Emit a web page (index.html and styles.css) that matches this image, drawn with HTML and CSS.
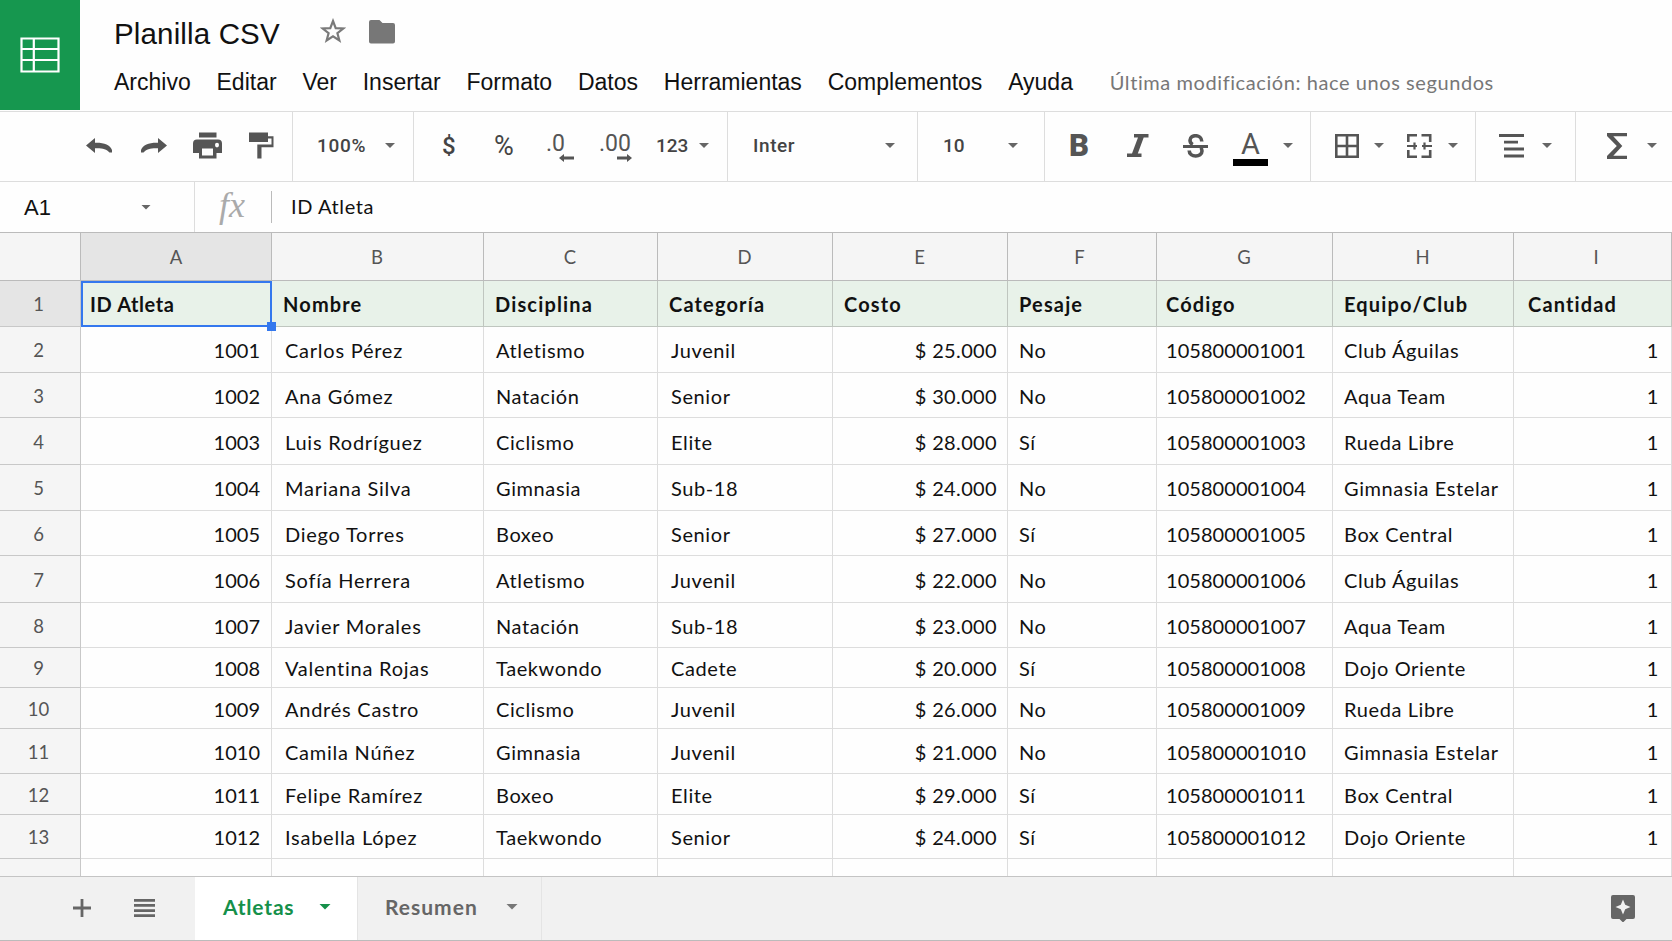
FILE: index.html
```html
<!DOCTYPE html>
<html lang="es">
<head>
    <meta charset="UTF-8">
    <meta name="viewport" content="width=device-width, initial-scale=1.0">
    <title>Planilla CSV</title>
    <link rel="stylesheet" href="styles.css">
</head>
<body>
    <header>
        <div class="logo">
            <svg width="40" height="36" viewBox="0 0 40 36" fill="none" stroke="#fff" stroke-width="2.2">
                <path d="M1.5 1.5h37v33h-37zM13.8 1.5v33M1.5 12h37M1.5 23h37"/>
            </svg>
        </div>
        <div class="heading">
            <div class="title-row">
                <h1>Planilla CSV</h1>
                <svg class="star" width="26" height="26" viewBox="0 0 26 26" fill="none" stroke="#7a7a7a" stroke-width="2.2">
                    <path d="M13 3l2.7 7.1 7.6.4-5.9 4.7 2 7.3-6.4-4.1-6.4 4.1 2-7.3-5.9-4.7 7.6-.4z"/>
                </svg>
                <svg class="folder" width="26" height="24" viewBox="0 0 26 24" fill="#777">
                    <path d="M2 0h8.500l3 3H24a2 2 0 0 1 2 2v16.500a2 2 0 0 1-2 2H2a2 2 0 0 1-2-2V2a2 2 0 0 1 2-2z"/>
                </svg>
            </div>
            <nav>
                <a>Archivo</a>
                <a>Editar</a>
                <a>Ver</a>
                <a>Insertar</a>
                <a>Formato</a>
                <a>Datos</a>
                <a>Herramientas</a>
                <a>Complementos</a>
                <a>Ayuda</a>
                <span class="modified">Última modificación: hace unos segundos</span>
            </nav>
        </div>
    </header>

    <div class="toolbar">
        <div class="group g-history">
            <svg class="undo" width="26" height="15" viewBox="0 0 26 15" fill="#555"><path d="M0 7.500L9 0v4.800c9-.3 15 2.200 17 7.200v2.600h-2.500C20.500 11 16 10 9 10.300V15z"/></svg>
            <svg class="redo" width="26" height="15" viewBox="0 0 26 15" fill="#555"><path d="M26 7.500L17 0v4.800C8 4.500 2 7 0 12v2.600h2.500C5.500 11 10 10 17 10.300V15z"/></svg>
            <svg class="print" width="29" height="27" viewBox="0 0 29 27" fill="#555"><path fill-rule="evenodd" d="M6 .5h17.500v5H6zM4 7.500h21a4 4 0 0 1 4 4V21h-5.500v5.500H6V21H0v-9.500a4 4 0 0 1 4-4zM9 16.500v7h11v-7zM24 10.800a2 2.300 0 1 0 0 4.600 2 2.300 0 0 0 0-4.600z"/></svg>
            <svg class="paint" width="25" height="27" viewBox="0 0 25 27" fill="#555"><path d="M0 .5h19v3.700h5.500v11H12.500V26.500H8.300v-14H22.500v-6H19v3.500H0z"/></svg>
        </div>
        <div class="group g-zoom">
            <span>100%</span>
            <i class="caret"></i>
        </div>
        <div class="group g-format">
            <span class="sign">$</span>
            <span class="sign percent">%</span>
            <span class="decimal less">.0
                <svg width="15" height="8" viewBox="0 0 15 8" fill="#555"><path d="M0 4l5-4v2.500h10v3H5V8z"/></svg>
            </span>
            <span class="decimal more">.00
                <svg width="15" height="8" viewBox="0 0 15 8" fill="#555"><path d="M15 4l-5-4v2.500H0v3h10V8z"/></svg>
            </span>
            <span class="number">123</span>
            <i class="caret"></i>
        </div>
        <div class="group g-font">
            <span>Inter</span>
            <i class="caret"></i>
        </div>
        <div class="group g-size">
            <span>10</span>
            <i class="caret"></i>
        </div>
        <div class="group g-text">
            <span class="bold">B</span>
            <svg class="italic" width="22" height="23" viewBox="0 0 22 23" fill="#555"><path d="M7 0H21.500v3.600h-4.800L10.800 19.400h3.700V23H0v-3.600h5L11 3.600H7z"/></svg>
            <svg class="strike" width="25" height="24" viewBox="0 0 25 24" fill="none" stroke="#555" stroke-width="3.600"><path d="M18.800 7.500C18.800 0 7 0 7 6.200c0 2 .8 3.300 2.800 4.300M6.200 16.500c0 7.200 12.800 7.200 12.800.6 0-1.300-.3-2.500-1.300-3.500"/><path stroke-width="3" d="M0 12.500h25"/></svg>
            <span class="color">A</span>
            <i class="caret"></i>
        </div>
        <div class="group g-cells">
            <svg width="24" height="24" viewBox="0 0 24 24" fill="none" stroke="#555" stroke-width="2.600"><path d="M1.300 1.300h21.400v21.400H1.300zM12 1.300v21.400M1.300 12h21.400"/></svg>
            <i class="caret"></i>
            <svg class="merge" width="25" height="24" viewBox="0 0 25 24" fill="none" stroke="#555" stroke-width="2.600"><path d="M1.300 8V1.300H10M14.500 1.300h8.700V8M1.300 16v6.700H10M14.500 22.700h8.700V16"/><path stroke-width="2.200" d="M0 12h10M15 12h10M7.500 8.500v7M17.500 8.500v7"/></svg>
            <i class="caret"></i>
        </div>
        <div class="group g-align">
            <svg width="25" height="24" viewBox="0 0 25 24" fill="#555"><path d="M0 0h25v3H0zM5 6.700h14v2.800H5zM5 13.500h20v3H5zM5 20.500h20v3H5z"/></svg>
            <i class="caret"></i>
        </div>
        <div class="group g-sum">
            <svg width="20" height="26" viewBox="0 0 20 26" fill="#555"><path d="M0 0h20v3.200H6.300l9 9.800-9 9.800H20V26H0v-3l9.800-10L0 3z"/></svg>
            <i class="caret"></i>
        </div>
    </div>

    <div class="formula-bar">
        <div class="name-box">
            <span>A1</span>
            <i class="caret"></i>
        </div>
        <span class="fx">fx</span>
        <span class="formula">ID Atleta</span>
    </div>

    <table>
        <colgroup>
            <col class="col-num"><col class="col-a"><col class="col-b"><col class="col-c"><col class="col-d">
            <col class="col-e"><col class="col-f"><col class="col-g"><col class="col-h"><col class="col-i">
        </colgroup>
        <thead>
            <tr><th></th><th class="active">A</th><th>B</th><th>C</th><th>D</th><th>E</th><th>F</th><th>G</th><th>H</th><th>I</th></tr>
        </thead>
        <tbody>
            <tr class="titles"><th class="active">1</th><td class="selected">ID Atleta</td><td>Nombre</td><td>Disciplina</td><td>Categoría</td><td>Costo</td><td>Pesaje</td><td>Código</td><td>Equipo/Club</td><td>Cantidad</td></tr>
            <tr><th>2</th><td>1001</td><td>Carlos Pérez</td><td>Atletismo</td><td>Juvenil</td><td>$ 25.000</td><td>No</td><td>105800001001</td><td>Club Águilas</td><td>1</td></tr>
            <tr><th>3</th><td>1002</td><td>Ana Gómez</td><td>Natación</td><td>Senior</td><td>$ 30.000</td><td>No</td><td>105800001002</td><td>Aqua Team</td><td>1</td></tr>
            <tr class="tall"><th>4</th><td>1003</td><td>Luis Rodríguez</td><td>Ciclismo</td><td>Elite</td><td>$ 28.000</td><td>Sí</td><td>105800001003</td><td>Rueda Libre</td><td>1</td></tr>
            <tr><th>5</th><td>1004</td><td>Mariana Silva</td><td>Gimnasia</td><td>Sub-18</td><td>$ 24.000</td><td>No</td><td>105800001004</td><td>Gimnasia Estelar</td><td>1</td></tr>
            <tr><th>6</th><td>1005</td><td>Diego Torres</td><td>Boxeo</td><td>Senior</td><td>$ 27.000</td><td>Sí</td><td>105800001005</td><td>Box Central</td><td>1</td></tr>
            <tr class="tall"><th>7</th><td>1006</td><td>Sofía Herrera</td><td>Atletismo</td><td>Juvenil</td><td>$ 22.000</td><td>No</td><td>105800001006</td><td>Club Águilas</td><td>1</td></tr>
            <tr><th>8</th><td>1007</td><td>Javier Morales</td><td>Natación</td><td>Sub-18</td><td>$ 23.000</td><td>No</td><td>105800001007</td><td>Aqua Team</td><td>1</td></tr>
            <tr><th>9</th><td>1008</td><td>Valentina Rojas</td><td>Taekwondo</td><td>Cadete</td><td>$ 20.000</td><td>Sí</td><td>105800001008</td><td>Dojo Oriente</td><td>1</td></tr>
            <tr><th>10</th><td>1009</td><td>Andrés Castro</td><td>Ciclismo</td><td>Juvenil</td><td>$ 26.000</td><td>No</td><td>105800001009</td><td>Rueda Libre</td><td>1</td></tr>
            <tr><th>11</th><td>1010</td><td>Camila Núñez</td><td>Gimnasia</td><td>Juvenil</td><td>$ 21.000</td><td>No</td><td>105800001010</td><td>Gimnasia Estelar</td><td>1</td></tr>
            <tr><th>12</th><td>1011</td><td>Felipe Ramírez</td><td>Boxeo</td><td>Elite</td><td>$ 29.000</td><td>Sí</td><td>105800001011</td><td>Box Central</td><td>1</td></tr>
            <tr><th>13</th><td>1012</td><td>Isabella López</td><td>Taekwondo</td><td>Senior</td><td>$ 24.000</td><td>Sí</td><td>105800001012</td><td>Dojo Oriente</td><td>1</td></tr>
            <tr class="cut"><th></th><td></td><td></td><td></td><td></td><td></td><td></td><td></td><td></td><td></td></tr>
        </tbody>
    </table>

    <footer>
        <div class="sheet-actions">
            <svg width="18" height="18" viewBox="0 0 18 18" fill="none" stroke="#666" stroke-width="2.800"><path d="M9 0v18M0 9h18"/></svg>
            <svg width="21" height="18" viewBox="0 0 21 18" fill="#666"><path d="M0 0h21v2.700H0zM0 5.100h21v2.700H0zM0 10.200h21v2.700H0zM0 15.300h21V18H0z"/></svg>
        </div>
        <div class="tab current"><span>Atletas</span><i class="caret"></i></div>
        <div class="tab"><span>Resumen</span><i class="caret"></i></div>
        <svg class="explore" width="24" height="27" viewBox="0 0 24 27"><path fill="#666" d="M2 0h20a2 2 0 0 1 2 2v20a2 2 0 0 1-2 2h-6.500L12 27.500 8.500 24H2a2 2 0 0 1-2-2V2a2 2 0 0 1 2-2z"/><path fill="#f1f1f1" d="M12 4.500l2.200 5.300 5.300 2.200-5.300 2.200L12 19.500l-2.200-5.300L4.500 12l5.300-2.200z"/></svg>
    </footer>
</body>
</html>
```
FILE: styles.css
```css
* {
    box-sizing: border-box;
}
body {
    margin: 0;
    height: 941px;
    overflow: hidden;
    background-color: #fefefe;
    color: #111;
    font-family: Lato, sans-serif;
    font-variant-ligatures: none;
}
svg {
    display: block;
    flex: none;
}

/* header */
header {
    display: flex;
    height: 111px;
}
.logo {
    width: 80px;
    height: 110px;
    padding: 37px 0 0 20px;
    background-color: #16974f;
}
.heading {
    padding-left: 34px;
}
.title-row {
    display: flex;
    height: 64px;
}
h1 {
    margin: 16px 0 0;
    width: 206px;
    font: 400 29.5px/36px "Liberation Sans", sans-serif;
    letter-spacing: 0.15px;
}
.star {
    margin-top: 18px;
}
.folder {
    margin: 20px 0 0 23px;
}
nav {
    display: flex;
    height: 37px;
    align-items: center;
    gap: 25.8px;
    font: 23px "Liberation Sans", sans-serif;
    white-space: nowrap;
}
.modified {
    margin-left: 11px;
    padding-bottom: 2px;
    color: #777;
    font: 20px Lato, sans-serif;
    letter-spacing: 0.58px;
}

/* toolbar */
.toolbar {
    display: flex;
    height: 71px;
    border-top: 1px solid #ddd;
    border-bottom: 1px solid #ddd;
    color: #444;
    font: 500 19px Roboto, sans-serif;
}
.group {
    display: flex;
    align-items: center;
    flex: none;
    padding-bottom: 2px;
    border-right: 1px solid #ddd;
}
.caret {
    flex: none;
    width: 10px;
    height: 5px;
    background-color: #666;
    clip-path: polygon(0 0, 100% 0, 50% 100%);
}
.g-history {
    width: 293px;
    padding-left: 86px;
}
.redo {
    margin-left: 29px;
}
.print {
    margin-left: 26px;
}
.paint {
    margin-left: 27px;
}
.g-zoom {
    width: 121px;
    padding-left: 24px;
}
.g-zoom span {
    width: 68px;
    letter-spacing: 0.7px;
}
.g-format {
    width: 314px;
    padding-left: 28px;
}
.sign {
    width: 52px;
    font-size: 24px;
}
.percent {
    font-weight: 400;
    font-size: 27px;
}
.decimal {
    position: relative;
    width: 53px;
    font: 400 23px Roboto, sans-serif;
    color: #555;
    padding-bottom: 4px;
}
.decimal svg {
    position: absolute;
    left: 18px;
    bottom: -1px;
}
.less svg {
    left: 13px;
}
.more {
    width: 57px;
}
.number {
    width: 43px;
}
.g-font {
    width: 190px;
    padding-left: 25px;
}
.g-font span {
    width: 132px;
    letter-spacing: 0.6px;
}
.g-size {
    width: 127px;
    padding-left: 25px;
}
.g-size span {
    width: 65px;
}
.g-text {
    width: 266px;
    padding-left: 24px;
}
.bold {
    width: 58px;
    color: #555;
    font: 900 31px Roboto, sans-serif;
}
.strike {
    margin-left: 34px;
}
.color {
    width: 35px;
    height: 36px;
    margin: 4px 15px 0 25px;
    border-bottom: 7px solid #000;
    color: #555;
    font: 400 29px/28px Roboto, sans-serif;
    text-align: center;
}
.g-cells {
    width: 165px;
    padding-left: 24px;
}
.g-cells .caret {
    margin-left: 15px;
}
.merge {
    margin-left: 23px;
}
.g-cells .merge + .caret {
    margin-left: 16px;
}
.g-align {
    width: 100px;
    padding-left: 23px;
}
.g-align .caret {
    margin-left: 18px;
}
.g-sum {
    padding-left: 31px;
    border-right: 0;
}
.g-sum .caret {
    margin-left: 20px;
}

/* formula bar */
.formula-bar {
    display: flex;
    height: 50px;
    align-items: center;
}
.name-box {
    display: flex;
    align-items: center;
    width: 195px;
    height: 100%;
    padding-left: 24px;
    border-right: 1px solid #ddd;
    font: 22px "Liberation Sans", sans-serif;
}
.name-box span {
    width: 117px;
    padding-top: 1px;
}
.fx {
    width: 77px;
    height: 32px;
    padding-left: 24px;
    border-right: 1px solid #bbb;
    color: #aaa;
    font: italic 36px/28px "Liberation Serif", serif;
}
.formula {
    padding: 0 0 2px 19px;
    font-size: 20px;
    letter-spacing: 0.6px;
}

/* grid */
table {
    width: 1672px;
    table-layout: fixed;
    border-spacing: 0;
    border-top: 1px solid #bbb;
    font-size: 20px;
    line-height: 24px;
    letter-spacing: 0.6px;
    white-space: nowrap;
}
.col-num { width: 81px; }
.col-a { width: 191px; }
.col-b { width: 212px; }
.col-c { width: 174px; }
.col-d { width: 175px; }
.col-e { width: 175px; }
.col-f { width: 149px; }
.col-g { width: 176px; }
.col-h { width: 181px; }
.col-i { width: 158px; }
th, td {
    height: 45px;
    padding: 1px 0 0;
    border-right: 1px solid #ddd;
    border-bottom: 1px solid #ddd;
}
th {
    padding: 1px 3px 0 0;
    background-color: #f5f5f5;
    border-color: #c8c8c8;
    color: #555;
    font-weight: 400;
    font-size: 18.5px;
    letter-spacing: 0;
}
thead th {
    height: 48px;
    padding: 0 1px 0 0;
    border-color: #bbb;
}
thead th:nth-child(2) {
    padding: 0;
}
thead th:nth-child(7) {
    padding-right: 5px;
}
thead th:nth-child(10) {
    padding: 0 0 0 7px;
}
th.active {
    background-color: #e5e5e5;
}
td {
    padding-left: 12px;
    text-align: left;
}
td:nth-child(2) {
    padding-right: 11px;
    letter-spacing: 0;
    text-align: right;
}
td:nth-child(3) {
    padding-left: 13px;
    letter-spacing: 0.75px;
}
td:nth-child(5) {
    padding-left: 13px;
}
td:nth-child(6) {
    padding-right: 10px;
    letter-spacing: 0.35px;
    text-align: right;
}
td:nth-child(7) {
    padding-left: 11px;
}
td:nth-child(8) {
    padding-left: 9px;
    letter-spacing: 0.05px;
}
td:nth-child(9) {
    padding-left: 11px;
}
td:nth-child(10) {
    padding-right: 12px;
    text-align: right;
}
.titles th, .titles td {
    height: 46px;
}
.titles td {
    padding-left: 11px;
    background-color: #e8f2e9;
    border-color: #bfc6bf;
    font-weight: 700;
    letter-spacing: 1.15px;
    text-align: left;
}
.titles td:nth-child(8) {
    padding-left: 9px;
}
.titles td:nth-child(10) {
    padding-left: 14px;
}
.titles td.selected {
    position: relative;
    padding-left: 9px;
    letter-spacing: 0.6px;
}
.selected::before {
    content: "";
    position: absolute;
    inset: 0 -1px -1px 0;
    border: 2px solid #3478ee;
}
.selected::after {
    content: "";
    position: absolute;
    right: -5px;
    bottom: -5px;
    width: 9px;
    height: 9px;
    background-color: #3478ee;
}
tbody tr:nth-child(2) > *, tbody tr:nth-child(5) > * { height: 46px; }
tbody tr.tall > * { height: 47px; }
tbody tr:nth-child(9) > * { height: 40px; }
tbody tr:nth-child(10) > *, tbody tr:nth-child(12) > * { height: 41px; }
tbody tr:nth-child(13) > * { height: 44px; }
tbody tr.cut > * {
    height: 17px;
    padding: 0;
    border-bottom: 0;
}

/* sheet tabs */
footer {
    display: flex;
    align-items: center;
    height: 65px;
    border-top: 1px solid #c4c4c4;
    border-bottom: 1px solid #bbb;
    background-color: #f1f1f1;
}
.sheet-actions {
    display: flex;
    gap: 43px;
    width: 195px;
    padding: 0 0 2px 73px;
}
.tab {
    display: flex;
    align-items: center;
    justify-content: space-between;
    width: 184px;
    height: 100%;
    padding: 0 23px 4px 27px;
    border-right: 1px solid #e4e4e4;
    color: #666;
    font-size: 21px;
    font-weight: 700;
    letter-spacing: 1px;
}
.tab .caret {
    width: 12px;
    height: 6px;
    background-color: #777;
}
.tab.current {
    width: 163px;
    padding-left: 28px;
    padding-right: 26px;
    background-color: #fff;
    color: #15904a;
    letter-spacing: 0.8px;
}
.tab.current .caret {
    background-color: #15904a;
}
.explore {
    margin: 0 37px 0 auto;
}
```
